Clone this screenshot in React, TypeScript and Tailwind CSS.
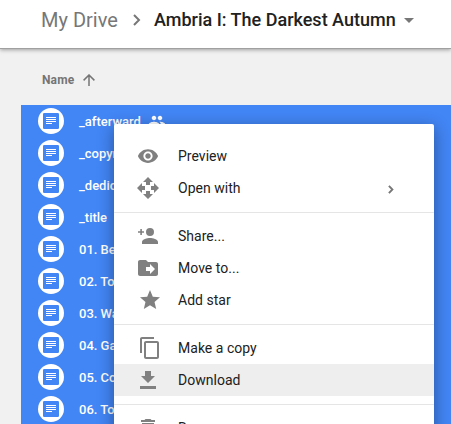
import type { ReactNode } from 'react';

const files = ['_afterward', '_copyright', '_dedication', '_title', '01. Beginnings', '02. Tomorrow', '03. Waking', '04. Gathering', '05. Coming', '06. Together'];

function DocIcon() {
  return (
    <span className="flex size-[26px] shrink-0 items-center justify-center rounded-full bg-white">
      <svg width="16" height="16" viewBox="0 0 16 16">
        <rect width="16" height="16" rx="1.3" fill="#4285f4" />
        <path d="M3 4.5h10M3 6.500h10M3 8.500h10M3 10.500h6" stroke="#fff" strokeWidth="1" />
      </svg>
    </span>
  );
}

function Glyph({ d, className = 'size-6' }: { d: string; className?: string }) {
  return (
    <svg viewBox="0 0 24 24" className={`shrink-0 ${className}`} fill="currentColor">
      <path d={d} />
    </svg>
  );
}

function Item({ icon, label, active, arrow }: { icon: ReactNode; label: string; active?: boolean; arrow?: boolean }) {
  return (
    <div className={`flex h-8 shrink-0 items-center pl-[22px] ${active ? 'bg-[#eeeeee]' : ''}`}>
      <span className="flex w-[42px] shrink-0 text-[#808080]">{icon}</span>
      <span className="text-[14px] leading-8 tracking-[0.02px] text-[#212121]">{label}</span>
      {arrow && (
        <svg width="6" height="9" viewBox="0 0 6 9" className="mt-0.5 mr-10 ml-auto" fill="none" stroke="#777" strokeWidth="1.9">
          <path d="M.9.9 4.4 4.5.9 8.1" />
        </svg>
      )}
    </div>
  );
}

function Separator() {
  return <div className="mt-2 mb-[7px] h-px shrink-0 bg-[#e5e5e5]" />;
}

export default function App() {
  return (
    <div className="relative flex h-[424px] w-[451px] flex-col overflow-hidden bg-[#f1f1f1] font-[Roboto,sans-serif]">
      <header className="flex h-[49px] shrink-0 items-center border-b border-[#a0a0a0] bg-white pb-2 pl-[41px] shadow-[0_1px_4px_rgba(0,0,0,0.35)]">
        <span className="w-[77px] shrink-0 text-[20px] leading-6 whitespace-nowrap text-[#777]">My Drive</span>
        <svg width="8" height="12" viewBox="0 0 8 12" className="ml-[15px] shrink-0" fill="none" stroke="#777" strokeWidth="2">
          <path d="m1 1 5 5-5 5" />
        </svg>
        <span className="ml-[13px] w-[242px] shrink-0 text-[18px] leading-6 font-medium whitespace-nowrap text-[#212121]">Ambria I: The Darkest Autumn</span>
        <svg width="10" height="5" viewBox="0 0 10 5" className="ml-2 shrink-0" fill="#777">
          <path d="M0 0h10L5 5z" />
        </svg>
      </header>

      <div className="flex h-14 shrink-0 items-center pt-1.5 pl-[42px] text-[#757575]">
        <span className="w-[35px] text-[12px] leading-4 font-bold tracking-[0.15px]">Name</span>
        <svg width="12" height="12" viewBox="0 0 12 12" className="ml-1.5" fill="none" stroke="currentColor" strokeWidth="1.5">
          <path d="M6 12V1M.6 6.4 6 1l5.4 5.4" />
        </svg>
      </div>

      <main className="ml-[21px] flex shrink-0 flex-col bg-[#4285f4]">
        {files.map((name, i) => (
          <div key={name} className="flex h-8 shrink-0 items-center pl-[17px] text-white">
            <DocIcon />
            <span className="mt-0.5 ml-[15px] text-[13px] leading-[30px] font-medium whitespace-nowrap">{name}</span>
            {i === 0 && (
              <Glyph
                className="ml-[7px] size-[18px]"
                d="M16 11c1.66 0 2.99-1.34 2.99-3S17.66 5 16 5s-3 1.34-3 3 1.34 3 3 3zm-8 0c1.66 0 2.99-1.34 2.99-3S9.66 5 8 5 5 6.34 5 8s1.34 3 3 3zm0 2c-2.33 0-7 1.17-7 3.5V19h14v-2.5C15 14.17 10.33 13 8 13zm8 0c-.29 0-.62.02-.97.05 1.16.84 1.97 1.97 1.97 3.45V19h6v-2.5c0-2.33-4.67-3.5-7-3.5z"
              />
            )}
          </div>
        ))}
      </main>

      <div className="absolute top-[124px] left-[114px] flex h-[340px] w-[320px] flex-col overflow-hidden rounded-[2px] bg-white pt-4 shadow-[0_4px_16px_rgba(0,0,0,0.38)]">
        <Item
          label="Preview"
          icon={<Glyph className="ml-[1px] size-[22px]" d="M12 4.5C7 4.5 2.73 7.61 1 12c1.73 4.39 6 7.5 11 7.5s9.27-3.11 11-7.5c-1.73-4.39-6-7.5-11-7.5zM12 17c-2.76 0-5-2.24-5-5s2.24-5 5-5 5 2.24 5 5-2.24 5-5 5zm0-8c-1.66 0-3 1.34-3 3s1.34 3 3 3 3-1.34 3-3-1.34-3-3-3z" />}
        />
        <Item
          label="Open with"
          arrow
          icon={<Glyph d="M10 9h4V6h3l-5-5-5 5h3v3zm-1 1H6V7l-5 5 5 5v-3h3v-4zm14 2l-5-5v3h-3v4h3v3l5-5zm-9 3h-4v3H7l5 5 5-5h-3v-3z" />}
        />
        <Separator />
        <Item
          label="Share..."
          icon={<Glyph d="M14 4a4 4 0 1 1 0 8 4 4 0 0 1 0-8zM6 20v-2c0-2.7 5.3-4 8-4s8 1.3 8 4v2zM4.3 5h1.6v2.2H8v1.6H5.9V11H4.3V8.800H2V7.200h2.300z" />}
        />
        <Item
          label="Move to..."
          icon={<Glyph d="M20 6h-8l-2-2H4c-1.1 0-2 .9-2 2v12c0 1.100.9 2 2 2h16c1.100 0 2-.9 2-2V8c0-1.100-.9-2-2-2zm-6 12v-3h-4v-4h4V8l5 5-5 5z" />}
        />
        <Item
          label="Add star"
          icon={<Glyph className="ml-[2px] size-6" d="M12 17.27L18.180 21l-1.640-7.030L22 9.240l-7.190-.61L12 2 9.190 8.630 2 9.240l5.460 4.730L5.820 21z" />}
        />
        <Separator />
        <Item
          label="Make a copy"
          icon={<Glyph className="ml-[2px] size-6" d="M16 1H4c-1.100 0-2 .9-2 2v14h2V3h12V1zm3 4H8c-1.100 0-2 .9-2 2v14c0 1.100.9 2 2 2h11c1.100 0 2-.9 2-2V7c0-1.100-.9-2-2-2zm0 16H8V7h11v14z" />}
        />
        <Item label="Download" active icon={<Glyph d="M9 3h6v5h4l-7 7-7-7h4zM4 18h16v3H4z" />} />
        <Separator />
        <Item label="Remove" icon={<Glyph d="M6 19c0 1.100.9 2 2 2h8c1.100 0 2-.9 2-2V7H6v12zM19 4h-3.500l-1-1h-5l-1 1H5v2h14V4z" />} />
      </div>
    </div>
  );
}
